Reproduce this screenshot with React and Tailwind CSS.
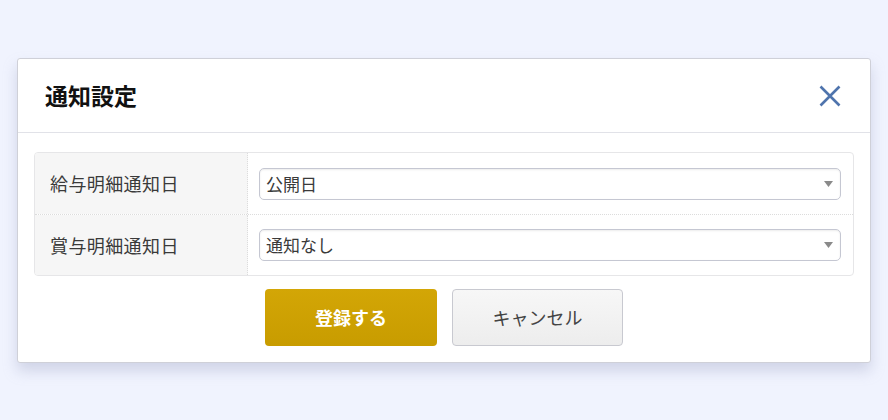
import { useState } from "react";

const rows = [
  { label: "給与明細通知日", value: "公開日" },
  { label: "賞与明細通知日", value: "通知なし" },
];

const Caret = () => (
  <svg width="9" height="6" viewBox="0 0 9 6" className="absolute right-[7px] top-1/2 -translate-y-1/2">
    <path d="M0 0 H9 L4.5 6 Z" fill="#8a8a8a" />
  </svg>
);

export default function App() {
  const [values] = useState(rows.map((r) => r.value));

  return (
    <div
      className="min-h-[420px] w-full bg-[#f0f3fe] pt-[58px] px-[17px]"
      style={{ fontFamily: '"Noto Sans CJK JP", "Noto Sans", sans-serif' }}
    >
      <div className="w-[854px] rounded-[3px] border border-[#cfd0d8] bg-white shadow-[0_8px_14px_rgba(150,155,190,0.35)]">
        <div className="flex h-[74px] items-center justify-between border-b border-[#e1e2e8] pl-[27px] pr-[28px]">
          <h1 className="text-[23px] font-bold leading-none text-[#111]">通知設定</h1>
          <button aria-label="閉じる" className="flex h-[24px] w-[24px] items-center justify-center">
            <svg width="22" height="22" viewBox="0 0 22 22">
              <path d="M1.5 1.5 L20.5 20.5 M20.5 1.5 L1.5 20.5" stroke="#4f74ad" strokeWidth="2.6" />
            </svg>
          </button>
        </div>

        <div className="px-[16px] pt-[19px] pb-[16px]">
          <div className="overflow-hidden rounded-[4px] border border-[#e6e6e8]">
            {rows.map((row, i) => (
              <div
                key={row.label}
                className={`flex h-[61px] ${i > 0 ? "border-t border-dotted border-[#dcdcdc]" : ""}`}
              >
                <div className="flex w-[213px] items-center border-r border-dotted border-[#dcdcdc] bg-[#f6f6f6] pl-[15px] text-[18px] tracking-[0.4px] text-[#3a3a3a]">
                  {row.label}
                </div>
                <div className="flex flex-1 items-center pl-[11px] pr-[12px]">
                  <div className="relative flex h-[32px] w-full items-center rounded-[5px] border border-[#c5c7d2] bg-white pl-[6px] text-[17px] text-[#3a3a3a] shadow-[inset_0_1px_2px_rgba(0,0,0,0.08)]">
                    {values[i]}
                    <Caret />
                  </div>
                </div>
              </div>
            ))}
          </div>

          <div className="mt-[13px] flex justify-center gap-[15px]">
            <button className="h-[57px] w-[172px] rounded-[4px] bg-gradient-to-b from-[#d3a606] to-[#c89c00] text-[18px] font-bold text-white">
              登録する
            </button>
            <button className="h-[57px] w-[171px] rounded-[4px] border border-[#c8c9d0] bg-gradient-to-b from-[#f7f7f7] to-[#ededed] text-[18px] text-[#444]">
              キャンセル
            </button>
          </div>
        </div>
      </div>
    </div>
  );
}
